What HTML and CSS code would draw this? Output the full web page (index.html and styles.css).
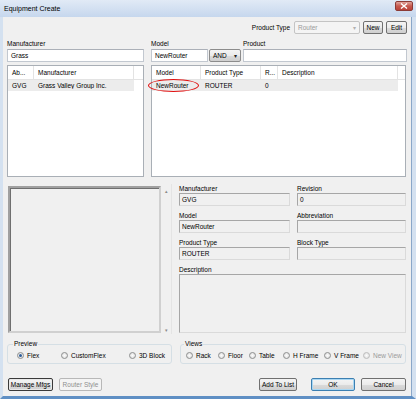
FILE: index.html
```html
<!DOCTYPE html>
<html lang="en">
<head>
    <meta charset="UTF-8">
    <meta name="viewport" content="width=device-width, initial-scale=1.0">
    <title>Equipment Create</title>
    <link rel="stylesheet" href="styles.css">
</head>
<body>
<div class="window">
    <!-- Title bar -->
    <div class="titlebar">
        <span class="title">Equipment Create</span>
        <span class="close">
            <svg width="8" height="6" viewBox="0 0 8 6"><path d="M1 0.5 L7 5.5 M7 0.5 L1 5.5" stroke="#fff" stroke-width="1.4"/></svg>
        </span>
    </div>

    <div class="client">
        <!-- Product type chooser -->
        <div class="toolbar">
            <span class="lbl">Product Type</span>
            <span class="combo disabled type-combo">Router<span class="arrow">&#9662;</span></span>
            <span class="btn small">New</span>
            <span class="btn small">Edit</span>
        </div>

        <!-- Search boxes -->
        <div class="search">
            <span class="lbl c1">Manufacturer</span>
            <span class="lbl c2">Model</span>
            <span class="lbl c4">Product</span>
            <span class="input c1">Grass</span>
            <span class="input c2">NewRouter</span>
            <span class="combo and-combo c3">AND<span class="arrow dark">&#9662;</span></span>
            <span class="input c4"></span>
        </div>

        <!-- Result lists -->
        <div class="lists">
            <div class="list mfg-list">
                <div class="lrow head">
                    <span>Ab...</span>
                    <span>Manufacturer</span>
                    <span></span>
                </div>
                <div class="lrow item">
                    <span>GVG</span>
                    <span>Grass Valley Group Inc.</span>
                </div>
            </div>
            <div class="list model-list">
                <div class="lrow head">
                    <span>Model</span>
                    <span>Product Type</span>
                    <span>R...</span>
                    <span>Description</span>
                    <span></span>
                </div>
                <div class="lrow item">
                    <span>NewRouter</span>
                    <span>ROUTER</span>
                    <span>0</span>
                    <span></span>
                </div>
                <span class="ring"></span>
            </div>
        </div>

        <!-- Preview and details -->
        <div class="details">
            <div class="preview">
                <div class="canvas"></div>
                <div class="vscroll">
                    <span>&#9652;</span>
                    <span>&#9662;</span>
                </div>
            </div>
            <div class="fields">
                <div class="field">
                    <span class="lbl">Manufacturer</span>
                    <span class="ro">GVG</span>
                </div>
                <div class="field">
                    <span class="lbl">Revision</span>
                    <span class="ro">0</span>
                </div>
                <div class="field">
                    <span class="lbl">Model</span>
                    <span class="ro">NewRouter</span>
                </div>
                <div class="field">
                    <span class="lbl">Abbreviation</span>
                    <span class="ro"></span>
                </div>
                <div class="field">
                    <span class="lbl">Product Type</span>
                    <span class="ro">ROUTER</span>
                </div>
                <div class="field">
                    <span class="lbl">Block Type</span>
                    <span class="ro"></span>
                </div>
                <div class="field wide">
                    <span class="lbl">Description</span>
                    <span class="ro desc"></span>
                </div>
            </div>
        </div>

        <!-- Option groups -->
        <div class="options">
            <fieldset class="group preview-group">
                <legend>Preview</legend>
                <label class="radio"><span class="dot on"></span>Flex</label>
                <label class="radio"><span class="dot"></span>CustomFlex</label>
                <label class="radio"><span class="dot"></span>3D Block</label>
            </fieldset>
            <fieldset class="group views-group">
                <legend>Views</legend>
                <label class="radio"><span class="dot"></span>Rack</label>
                <label class="radio"><span class="dot"></span>Floor</label>
                <label class="radio"><span class="dot"></span>Table</label>
                <label class="radio"><span class="dot"></span>H Frame</label>
                <label class="radio"><span class="dot"></span>V Frame</label>
                <label class="radio off"><span class="dot"></span>New View</label>
            </fieldset>
        </div>

        <!-- Bottom buttons -->
        <div class="actions">
            <span class="btn focus mfgs">Manage Mfgs</span>
            <span class="btn disabled style">Router Style</span>
            <span class="spacer"></span>
            <span class="btn add">Add To List</span>
            <span class="btn default ok">OK</span>
            <span class="btn cancel">Cancel</span>
        </div>
    </div>
</div>
</body>
</html>
```

FILE: styles.css
```css
/* Dasar */
* { box-sizing: border-box; }
body {
    margin: 0;
    font-family: "Liberation Sans", Arial, sans-serif;
    font-size: 6.5px;
    color: #000;
}

.window {
    width: 416px;
    height: 399px;
    background: #f0f0f0;
    border-left: 3px solid #d4e1f0;
    border-right: 4px solid #d4e1f0;
    border-bottom: 3px solid #5f8fc4;
    box-shadow: inset -1px 0 0 #8aa7c9;
    display: flex;
    flex-direction: column;
}

/* Title bar */
.titlebar {
    height: 17px;
    margin-left: -3px;
    margin-right: -4px;
    padding: 0 4px;
    background: linear-gradient(#e1eaf6, #c6d7ed);
    display: flex;
    align-items: center;
    justify-content: space-between;
}
.title { font-size: 7px; }
.close {
    width: 18px;
    height: 10px;
    margin-top: -5px;
    margin-right: -1px;
    border: 1px solid #8c3b36;
    border-radius: 2px;
    background: linear-gradient(#e0a49b, #c75a4e 50%, #b8423a);
    display: flex;
    align-items: center;
    justify-content: center;
}

.client {
    flex: 1;
    padding: 4px 5px 0 4px;
    display: flex;
    flex-direction: column;
}

.lbl { line-height: 9px; white-space: nowrap; }

/* Toolbar */
.toolbar {
    height: 13px;
    display: flex;
    align-items: center;
    justify-content: flex-end;
    gap: 3px;
}
.toolbar .lbl { margin-right: 1px; }
.toolbar .btn.small:first-of-type { margin-left: 5px; }

/* Buttons */
.btn {
    height: 13px;
    padding: 0 3px;
    border: 1px solid #707070;
    border-radius: 2px;
    background: linear-gradient(#f4f4f4, #ebebeb 50%, #dbdbdb 51%, #cfcfcf);
    display: flex;
    align-items: center;
    justify-content: center;
    white-space: nowrap;
}
.btn.small { width: 20px; padding: 0; }
.btn.small + .btn.small { width: 21px; }
.btn.disabled {
    color: #8f8f8f;
    border-color: #b8b8b8;
    background: #f4f4f4;
}
.btn.focus { border-color: #3a3a3a; box-shadow: inset 0 0 0 1px #e8e8e8; }
.btn.default { border-color: #3c7fb1; box-shadow: inset 0 0 0 1px #a9d7f3; }

/* Combo boxes */
.combo {
    height: 13px;
    padding: 0 3px;
    border: 1px solid #a8a8a8;
    border-radius: 2px;
    display: flex;
    align-items: center;
    justify-content: space-between;
}
.combo.disabled { color: #9a9a9a; background: #f4f4f4; border-color: #c4c4c4; }
.type-combo { width: 66px; }
.and-combo {
    border-color: #8c8c8c;
    background: linear-gradient(#f4f4f4, #ebebeb 50%, #dbdbdb 51%, #cfcfcf);
}
.arrow { font-size: 6px; color: #b0b0b0; }
.arrow.dark { color: #222; }

/* Search row: kolom 7-144 / 151-208 / 209-241 / 243-408 */
.search {
    margin-top: 4px;
    display: grid;
    grid-template-columns: 144px 58px 34px 1fr;
    grid-template-rows: 10px 13px;
    row-gap: 1px;
}
.search .lbl { align-self: end; }
.search .c1 { grid-column: 1; margin-right: 7px; }
.search .c2 { grid-column: 2; margin-right: 1px; }
.search .c3 { grid-column: 3; margin-right: 2px; }
.search .c4 { grid-column: 4; }
.search .lbl.c2 { grid-column: 2 / 4; }
.input {
    height: 13px;
    padding: 0 3px;
    background: #fff;
    border: 1px solid #c2c8d0;
    border-top-color: #abb0b8;
    display: flex;
    align-items: center;
}

/* Lists */
.lists {
    margin-top: 3px;
    height: 112px;
    display: flex;
    gap: 7px;
}
.list {
    position: relative;
    background: #fff;
    border: 1px solid #a9afb6;
}
.mfg-list { width: 137px; }
.model-list { flex: 1; margin-right: 1px; }
.lrow { display: grid; height: 11px; align-items: center; }
.lrow.head {
    height: 14px;
    border-bottom: 1px solid #e3e3e3;
}
.lrow.head span {
    height: 100%;
    display: flex;
    align-items: center;
    border-right: 1px solid #e3e3e3;
}
.lrow span { padding-left: 4px; white-space: nowrap; overflow: hidden; }
.lrow.head span:last-child { border-right: 0; }
.mfg-list .lrow { grid-template-columns: 26px 100px 1fr; }
.model-list .lrow { grid-template-columns: 49px 60px 17px 120px 1fr; }
.lrow.item { background: #ececec; }
.mfg-list .lrow.item { width: 126px; }
.model-list .lrow.item { width: 246px; }

/* Red ring over the new model */
.ring {
    position: absolute;
    left: -4px;
    top: 13px;
    width: 51px;
    height: 13px;
    border: 1.5px solid #e01010;
    border-radius: 50%;
}

/* Preview + detail fields */
.details {
    margin-top: 7px;
    height: 150px;
    display: flex;
    gap: 7px;
}
.preview {
    width: 165px;
    display: flex;
    padding-top: 2px;
    padding-bottom: 1px;
    border-right: 1px solid #e4e4e4;
}
.canvas {
    flex: 1;
    margin-left: 1px;
    border: 2px solid #a0a0a0;
    border-right-color: #d0d0d0;
    border-bottom-color: #d0d0d0;
    box-shadow: inset 1px 1px 0 #6f6f6f;
}
.vscroll {
    width: 10px;
    display: flex;
    flex-direction: column;
    justify-content: space-between;
    align-items: center;
    font-size: 5px;
    color: #8a8a8a;
    padding: 2px 0 0;
}
.fields {
    flex: 1;
    display: grid;
    grid-template-columns: 111px 1fr;
    column-gap: 7px;
    row-gap: 5px;
    align-content: start;
    margin-right: 1px;
}
.field { display: flex; flex-direction: column; }
.field.wide { grid-column: span 2; }
.ro {
    height: 13px;
    padding: 0 2px;
    border: 1px solid #dadada;
    border-top-color: #a6a6a6;
    border-left-color: #a6a6a6;
    background: #f0f0f0;
    display: flex;
    align-items: center;
}
.ro.desc { height: 59px; }

/* Radio groups */
.options {
    margin-top: 6px;
    display: flex;
    gap: 8px;
}
.group {
    margin: 0;
    padding: 2px 0 3px 5px;
    height: 24px;
    border: 1px solid #d5dfe5;
    border-radius: 3px;
    display: flex;
    align-items: center;
}
.group legend { padding: 0 1px; margin-left: -2px; line-height: 8px; }
.preview-group { width: 165px; padding-left: 9px; }
.preview-group legend { margin-left: -4px; }
.preview-group .radio:nth-of-type(1) { width: 44px; }
.preview-group .radio:nth-of-type(2) { width: 68px; }
.views-group { flex: 1; margin-right: 1px; }
.views-group .radio:nth-of-type(1) { width: 32px; }
.views-group .radio:nth-of-type(2) { width: 31px; }
.views-group .radio:nth-of-type(3) { width: 34px; }
.views-group .radio:nth-of-type(4) { width: 41px; }
.views-group .radio:nth-of-type(5) { width: 39px; }
.radio { display: flex; align-items: center; white-space: nowrap; }
.radio.off { color: #9a9a9a; }
.dot {
    width: 7px;
    height: 7px;
    margin-right: 3px;
    border: 1px solid #8e8f8f;
    border-radius: 50%;
    background: radial-gradient(#fdfdfd, #d8d8d8);
    display: inline-block;
    position: relative;
}
.dot.on::after {
    content: "";
    position: absolute;
    left: 1px;
    top: 1px;
    width: 3px;
    height: 3px;
    border-radius: 50%;
    background: #2c5d99;
}
.radio.off .dot { border-color: #bcbcbc; }

/* Bottom buttons */
.actions {
    margin-top: 14px;
    display: flex;
    align-items: center;
    gap: 6px;
}
.spacer { flex: 1; }
.mfgs { width: 45px; padding: 0; margin-left: 1px; }
.style { width: 43px; }
.add { width: 38px; margin-right: 8px; }
.ok { width: 44px; }
.cancel { width: 45px; margin-right: 1px; }
```
